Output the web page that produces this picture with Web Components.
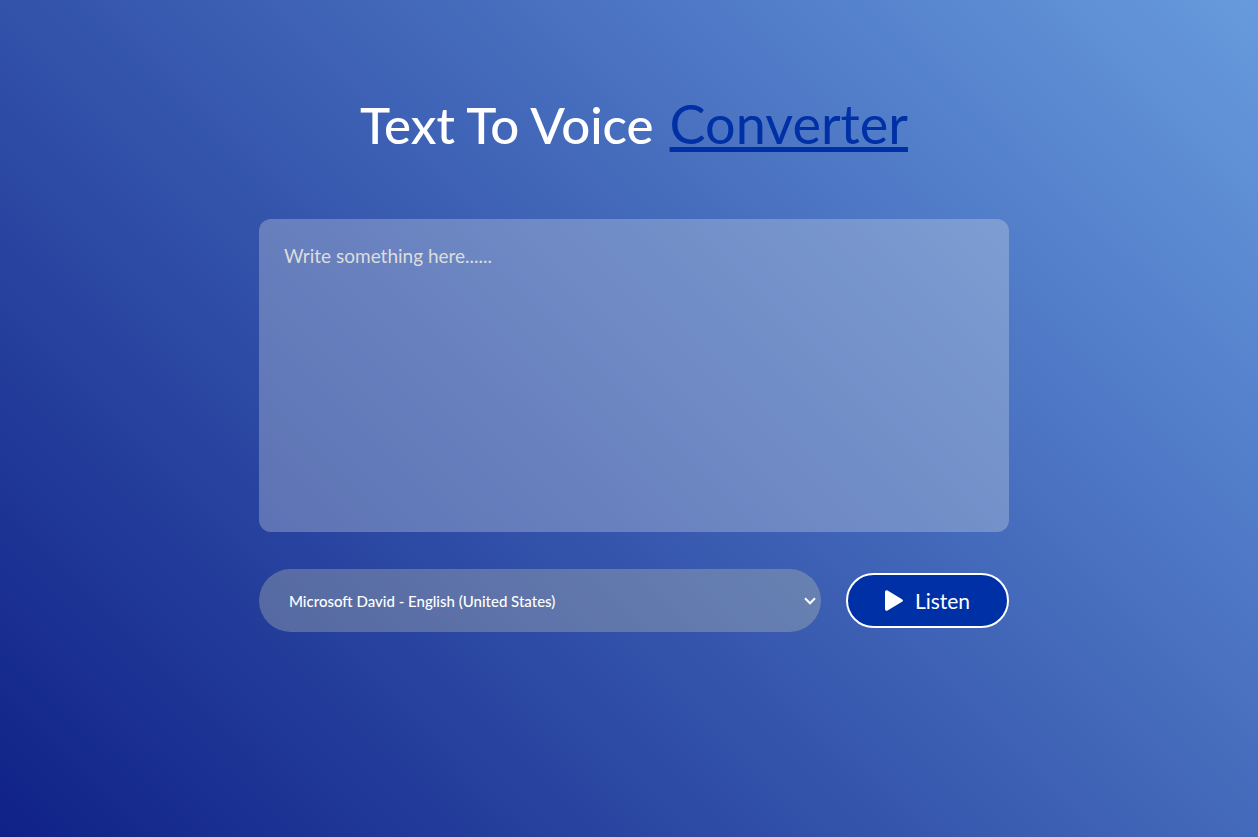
<!DOCTYPE html>
<html lang="en">
<head>
<meta charset="utf-8">
<meta name="viewport" content="width=device-width, initial-scale=1">
<title>Text To Voice Converter</title>
<style>
  body {
    margin: 0;
    min-height: 100vh;
    background: linear-gradient(45deg, #0f2187, #679add) no-repeat;
    font-family: "Gill Sans MT", "Gill Sans", Lato, sans-serif;
    color: #fff;
  }
</style>
</head>
<body>
<voice-converter>
  <page-title slot="title">Text To Voice <span slot="accent">Converter</span></page-title>
  <speech-text></speech-text>
  <voice-controls></voice-controls>
</voice-converter>
<script>
  function define(name, html) {
    customElements.define(name, class extends HTMLElement {
      constructor() {
        super();
        const template = document.createElement('template');
        template.innerHTML = html;
        this.attachShadow({ mode: 'open' }).append(template.content.cloneNode(true));
      }
    });
  }

  define('voice-converter', `
    <style>
      :host { display: block; padding: 89px 0 40px 10px; }
      main { max-width: 750px; margin: 0 auto; }
    </style>
    <main><slot name="title"></slot><slot></slot></main>`);

  define('page-title', `
    <style>
      :host { display: block; margin-bottom: 59px; }
      h1 { display: flex; flex-wrap: wrap; align-items: baseline; justify-content: center;
           gap: 0 16px; margin: 0; font-size: 51px; line-height: 70px; font-weight: 500; }
      .accent { color: #0030a5; font-size: 54px; font-weight: 400; text-decoration: underline;
              text-decoration-thickness: 5px; text-underline-offset: 3px;
              text-decoration-skip-ink: none; }
    </style>
    <h1><span><slot></slot></span><span class="accent"><slot name="accent"></slot></span></h1>`);

  define('speech-text', `
    <style>
      :host { display: block; margin-bottom: 37px; }
      textarea { display: block; box-sizing: border-box; width: 100%; height: 313px;
                 padding: 25px; border: 0; border-radius: 12px; outline: 0; resize: none;
                 background: rgba(221, 228, 232, .3); color: #fff;
                 font: 400 19px/24px "Gill Sans MT", "Gill Sans", Lato, sans-serif; }
      textarea::placeholder { color: #ddd; opacity: 1; }
    </style>
    <textarea aria-label="Text to speak" placeholder="Write something here......"></textarea>`);

  define('voice-controls', `
    <style>
      :host { display: flex; align-items: center; gap: 25px; }
      .voice { position: relative; flex: 1; min-width: 0; }
      select { appearance: none; display: block; box-sizing: border-box; width: 100%;
               height: 63px; padding: 0 30px; border: 0; border-radius: 32px; outline: 0;
               background: rgba(204, 208, 180, .3); color: #fff;
               font: 500 15px/20px "Gill Sans MT", "Gill Sans", Lato, sans-serif; }
      option { color: #222; }
      .chevron { position: absolute; right: 5px; top: 28px; pointer-events: none; }
      button { display: flex; align-items: center; justify-content: center; gap: 12px;
               box-sizing: border-box; width: 163px; height: 55px; padding: 0;
               border: 2px solid #fff; border-radius: 28px; background: #0030a5; color: #fff;
               font: 400 21px/28px "Gill Sans MT", "Gill Sans", Lato, sans-serif; cursor: pointer; }
      svg { display: block; }
    </style>
    <div class="voice">
      <select aria-label="Voice"><option>Microsoft David - English (United States)</option></select>
      <svg class="chevron" width="12" height="8" viewBox="0 0 12 8" aria-hidden="true"><path d="M1 1.300L6 6.300L11 1.300" fill="none" stroke="#fff" stroke-width="2"/></svg>
    </div>
    <button type="button">
      <svg width="18" height="21" viewBox="0 0 18 21" aria-hidden="true"><path d="M0 2C0 .5 1.300-.3 2.600.4L17 9.200c1.300.8 1.300 1.800 0 2.600L2.600 20.600C1.300 21.300 0 20.500 0 19z" fill="#fff"/></svg>
      <span>Listen</span>
    </button>`);
</script>
</body>
</html>
